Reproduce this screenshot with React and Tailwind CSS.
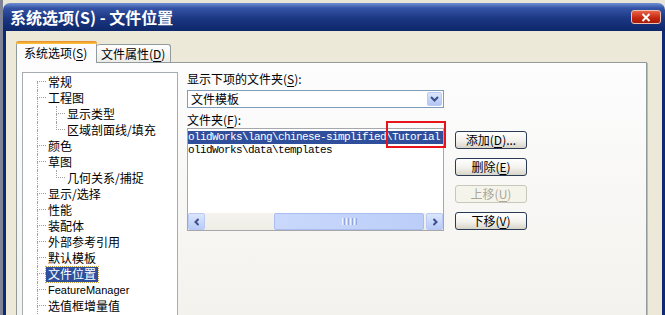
import React from "react";

const treeItems = [
  { label: "常规", level: 0, first: true },
  { label: "工程图", level: 0 },
  { label: "显示类型", level: 1 },
  { label: "区域剖面线/填充", level: 1, last: true },
  { label: "颜色", level: 0 },
  { label: "草图", level: 0 },
  { label: "几何关系/捕捉", level: 1, last: true },
  { label: "显示/选择", level: 0 },
  { label: "性能", level: 0 },
  { label: "装配体", level: 0 },
  { label: "外部参考引用", level: 0 },
  { label: "默认模板", level: 0 },
  { label: "文件位置", level: 0, selected: true },
  { label: "FeatureManager", level: 0, latin: true },
  { label: "选值框增量值", level: 0 },
];

const Key = ({ children }) => <span className="underline underline-offset-2">{children}</span>;

// dotted tree connector: top half carries the stub, bottom half continues the line
const Connector = ({ stub, topLine = true, bottomLine = true }) => (
  <div className="flex w-[9px] shrink-0 flex-col">
    <div
      className={
        "h-[8px] border-dotted border-[#a0a0a0] " +
        (topLine ? "border-l " : "") +
        (stub ? "border-b" : "")
      }
    />
    <div className={"h-[8px] border-dotted border-[#a0a0a0] " + (bottomLine ? "border-l" : "")} />
  </div>
);

const TreeRow = ({ item }) => (
  <div className="flex h-[16px] items-stretch">
    <div className="w-[14px] shrink-0" />
    {item.level === 0 ? (
      <Connector stub topLine={!item.first} />
    ) : (
      <>
        <Connector />
        <div className="w-[10px] shrink-0" />
        <Connector stub bottomLine={!item.last} />
      </>
    )}
    <div className="flex items-center">
      <span
        className={
          "flex h-[15px] items-center px-[2px] leading-none " +
          (item.latin ? "font-['Liberation_Sans',sans-serif] text-[11px] " : "text-[12px] ") +
          (item.selected
            ? "bg-[#2f4f9c] text-white outline outline-1 outline-dotted outline-[#c8a040]"
            : "text-black")
        }
      >
        {item.label}
      </span>
    </div>
  </div>
);

const XpButton = ({ children, disabled }) => (
  <button
    className={
      "flex h-[18px] w-[72px] items-center justify-center rounded-[3px] border text-[12px] leading-none " +
      (disabled
        ? "border-[#c9c7ba] bg-[#f5f4ea] text-[#aca899]"
        : "border-[#2b3a55] bg-[linear-gradient(180deg,#ffffff_0%,#f2f1ec_55%,#d8d4c8_100%)] text-black")
    }
  >
    {children}
  </button>
);

const ScrollArrow = ({ dir }) => (
  <div className="flex w-[17px] shrink-0 items-center justify-center rounded-[2px] border border-[#b9cbf5] bg-[linear-gradient(180deg,#dce6fd,#b8cbf6)]">
    <svg width="8" height="8" viewBox="0 0 8 8">
      <path
        d={dir === "left" ? "M5.5 1 L2.5 4 L5.5 7" : "M2.5 1 L5.5 4 L2.5 7"}
        fill="none"
        stroke="#3a4f8c"
        strokeWidth="2"
      />
    </svg>
  </div>
);

export default function App() {
  return (
    <div className="flex h-[315px] w-[665px] overflow-hidden bg-[#e9e6d8] font-['Noto_Sans_CJK_SC','Noto_Sans',sans-serif]">
      {/* sliver of the window behind */}
      <div className="w-[3px] shrink-0 bg-[#7f8596]" />

      <div className="mt-[3px] flex flex-1 flex-col">
        {/* title bar */}
        <div className="flex h-[28px] shrink-0 items-center justify-between rounded-t-[7px] bg-[linear-gradient(180deg,#6f8fd3_0%,#3554a6_18%,#1c3783_55%,#0d2769_100%)] pl-[7px] pr-[4px]">
          <span className="text-[16px] font-bold leading-none text-white">系统选项(S) - 文件位置</span>
          <div className="flex h-[14px] w-[30px] items-center justify-center rounded-[3px] border border-[#f0c0b0] bg-[linear-gradient(180deg,#e8644a,#c4260d_60%,#a81c08)]">
            <svg width="10" height="9" viewBox="0 0 10 9">
              <path d="M1.5 1 L8.5 8 M8.5 1 L1.5 8" stroke="#ffffff" strokeWidth="2" />
            </svg>
          </div>
        </div>

        {/* frame */}
        <div className="flex flex-1">
          <div className="w-[3px] shrink-0 bg-[#0f2a70]" />
          <div className="flex flex-1 flex-col bg-[#ece9d8] pl-[10px] pr-[15px] pt-[10px]">
            {/* tabs */}
            <div className="flex h-[21px] items-end">
              <div className="relative z-10 -mb-px flex h-[22px] w-[81px] flex-col rounded-t-[3px] border-x border-[#919b9c] bg-[#fcfcfe]">
                <div className="-mx-px h-[3px] rounded-t-[3px] bg-[linear-gradient(180deg,#e68b2c,#ffc83c)]" />
                <div className="flex flex-1 items-center pb-[2px] pl-[7px] text-[12px] leading-none text-black">
                  系统选项(<Key>S</Key>)
                </div>
              </div>
              <div className="flex h-[18px] w-[74px] items-center rounded-t-[3px] border border-b-0 border-l-0 border-[#919b9c] bg-[linear-gradient(180deg,#ffffff,#ecebe6)] pl-[4px] text-[12px] leading-none text-black">
                文件属性(<Key>D</Key>)
              </div>
            </div>

            {/* tab panel */}
            <div className="flex h-[260px] border border-[#919b9c] bg-[linear-gradient(180deg,#fdfdfe,#f3f2ed)] pl-[5px] pt-[9px] shadow-[1px_1px_0_#c0bdb0]">
              {/* tree */}
              <div className="flex h-[250px] w-[156px] shrink-0 flex-col border border-[#a5acb2] bg-white pt-[1px]">
                {treeItems.map((item) => (
                  <TreeRow key={item.label} item={item} />
                ))}
              </div>

              {/* right column */}
              <div className="ml-[9px] flex flex-col text-[12px] leading-none text-black">
                <div className="flex h-[14px] items-center">
                  显示下项的文件夹(<Key>S</Key>):
                </div>
                <div className="mt-[4px] flex h-[18px] w-[257px] items-stretch border border-[#7f9db9] bg-white p-[1px]">
                  <div className="flex flex-1 items-center pl-[2px]">文件模板</div>
                  <div className="flex w-[15px] items-center justify-center rounded-[2px] border border-[#b9cbf5] bg-[linear-gradient(180deg,#dce6fd,#b2c6f4)]">
                    <svg width="9" height="6" viewBox="0 0 9 6">
                      <path d="M1 1 L4.5 4.5 L8 1" fill="none" stroke="#3a4f8c" strokeWidth="2" />
                    </svg>
                  </div>
                </div>
                <div className="mt-[5px] flex h-[14px] items-center">
                  文件夹(<Key>F</Key>):
                </div>

                <div className="relative mt-[1px] flex">
                  {/* folder list */}
                  <div className="flex h-[103px] w-[257px] flex-col border border-[#a7a6aa] bg-white">
                    <div className="flex-1 overflow-hidden pt-[2px] font-['Liberation_Mono',monospace] text-[11px] tracking-[-0.6px]">
                      <div className="flex h-[13px] items-center whitespace-nowrap bg-[#2f4f9c] text-white">
                        <span>olidWorks\lang\chinese-simplified\Tutorial</span>
                      </div>
                      <div className="flex h-[13px] items-center whitespace-nowrap text-black">
                        <span>olidWorks\data\templates</span>
                      </div>
                    </div>
                    <div className="flex h-[17px] shrink-0 bg-[#f3f1ec]">
                      <ScrollArrow dir="left" />
                      <div className="flex flex-1 bg-[linear-gradient(180deg,#f4f3ee,#eeede5)] pr-[2px]">
                        <div className="w-[69px] shrink-0" />
                        <div className="flex w-[150px] items-center justify-center gap-[1px] rounded-[2px] border border-[#a9bdf0] bg-[linear-gradient(90deg,#c9d8fc,#bccef8)]">
                          <div className="h-[7px] w-[1px] bg-[#eef3ff]" />
                          <div className="h-[7px] w-[1px] bg-[#8fa6e0]" />
                          <div className="h-[7px] w-[1px] bg-[#eef3ff]" />
                          <div className="h-[7px] w-[1px] bg-[#8fa6e0]" />
                          <div className="h-[7px] w-[1px] bg-[#eef3ff]" />
                          <div className="h-[7px] w-[1px] bg-[#8fa6e0]" />
                          <div className="h-[7px] w-[1px] bg-[#eef3ff]" />
                          <div className="h-[7px] w-[1px] bg-[#8fa6e0]" />
                        </div>
                      </div>
                      <ScrollArrow dir="right" />
                    </div>
                  </div>

                  {/* buttons */}
                  <div className="ml-[11px] flex flex-col gap-[9px] pt-[3px]">
                    <XpButton>
                      添加(<Key>D</Key>)...
                    </XpButton>
                    <XpButton>
                      删除(<Key>E</Key>)
                    </XpButton>
                    <XpButton disabled>
                      上移(<Key>U</Key>)
                    </XpButton>
                    <XpButton>
                      下移(<Key>V</Key>)
                    </XpButton>
                  </div>

                  {/* red annotation box */}
                  <div className="absolute left-[199px] top-[-7px] h-[27px] w-[60px] border-2 border-[#e8141b]" />
                </div>
              </div>
            </div>
          </div>
          <div className="w-[3px] shrink-0 bg-[#0f2a70]" />
        </div>
      </div>
    </div>
  );
}
